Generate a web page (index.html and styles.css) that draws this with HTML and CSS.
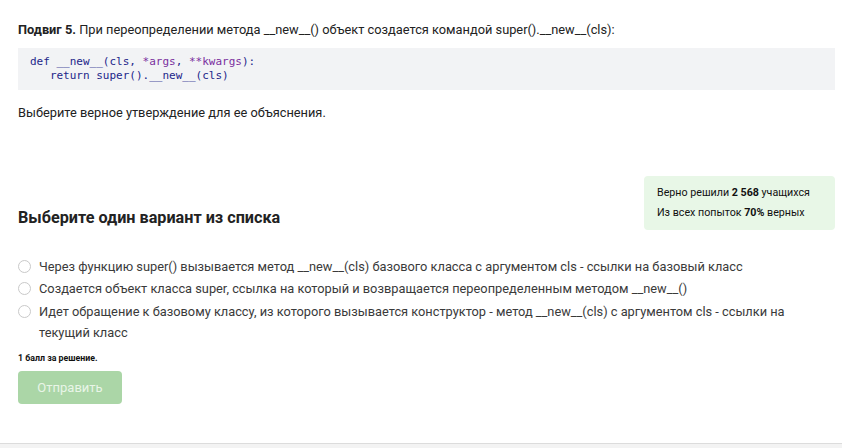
FILE: index.html
```html
<!DOCTYPE html>
<html lang="ru">
<head>
<meta charset="utf-8">
<link rel="stylesheet" href="styles.css">
</head>
<body>
<div class="page">
  <p class="title"><b>Подвиг 5.</b> При переопределении метода __new__() объект создается командой super().__new__(cls):</p>
  <pre class="code"><span class="kw">def</span> <span class="nm">__new__(cls, </span><span class="pp">*args</span><span class="nm">, </span><span class="pp">**kwargs</span><span class="nm">):</span>
   <span class="kw">return</span> <span class="nm">super().__new__(cls)</span></pre>
  <p class="desc">Выберите верное утверждение для ее объяснения.</p>
  <div class="head-row">
    <h2 class="heading">Выберите один вариант из списка</h2>
    <div class="stats">
      <div>Верно решили <b>2 568</b> учащихся</div>
      <div>Из всех попыток <b>70%</b> верных</div>
    </div>
  </div>
  <ul class="options">
    <li class="option"><span class="radio"></span><span class="otext">Через функцию super() вызывается метод __new__(cls) базового класса с аргументом cls - ссылки на базовый класс</span></li>
    <li class="option"><span class="radio"></span><span class="otext">Создается объект класса super, ссылка на который и возвращается переопределенным методом __new__()</span></li>
    <li class="option"><span class="radio"></span><span class="otext">Идет обращение к базовому классу, из которого вызывается конструктор - метод __new__(cls) с аргументом cls - ссылки на текущий класс</span></li>
  </ul>
  <p class="score">1 балл за решение.</p>
  <button class="submit">Отправить</button>
</div>
</body>
</html>
```
FILE: styles.css
```css
html {
  background: #f3f3f3;
}
body {
  margin: 0;
  font-family: Roboto, "Liberation Sans", sans-serif;
  color: #222;
}
.page {
  background: #fff;
  padding: 20px 7px 39px 18px;
  border-bottom: 1px solid #dcdcdc;
}
.title {
  margin: 0;
  font-size: 12.8px;
  line-height: 20px;
  color: #222;
}
.title b {
  font-weight: 700;
}
.code {
  margin: 8px 0 0;
  background: #f2f3f5;
  padding: 7px 12px;
  font-family: "DejaVu Sans Mono", monospace;
  font-size: 11px;
  line-height: 14px;
  color: #2b2d8c;
}
.kw { color: #23268a; }
.nm { color: #23268a; }
.pp { color: #7a2f9e; }
.desc {
  margin: 13px 0 0;
  font-size: 12.8px;
  line-height: 20px;
  color: #222;
}
.head-row {
  margin-top: 53px;
  display: flex;
  justify-content: space-between;
  align-items: flex-end;
}
.heading {
  margin: 0;
  font-size: 16.2px;
  line-height: 24px;
  font-weight: 700;
  color: #222;
}
.stats {
  background: #e8f7e7;
  border-radius: 4px;
  padding: 7px 13px;
  width: 165px;
  font-size: 10.7px;
  line-height: 20px;
  color: #111;
}
.options {
  list-style: none;
  margin: 25.5px 0 0;
  padding: 0;
  display: flex;
  flex-direction: column;
  gap: 1.5px;
}
.option {
  display: flex;
  align-items: flex-start;
  font-size: 12.8px;
  line-height: 21px;
  color: #3a3a3a;
  padding-right: 40px;
}
.radio {
  flex: none;
  width: 11px;
  height: 11px;
  border: 1px solid #c9c9c9;
  border-radius: 50%;
  margin: 4px 8px 0 0;
  background: #fff;
}
.score {
  margin: 9.5px 0 0;
  font-size: 8.8px;
  line-height: 12px;
  font-weight: 700;
  color: #111;
}
.submit {
  margin-top: 7px;
  width: 104px;
  height: 33px;
  border: none;
  border-radius: 4px;
  background: #abd6a7;
  color: #e9f5e7;
  font-family: Roboto, "Liberation Sans", sans-serif;
  font-size: 13px;
  display: block;
}
```
